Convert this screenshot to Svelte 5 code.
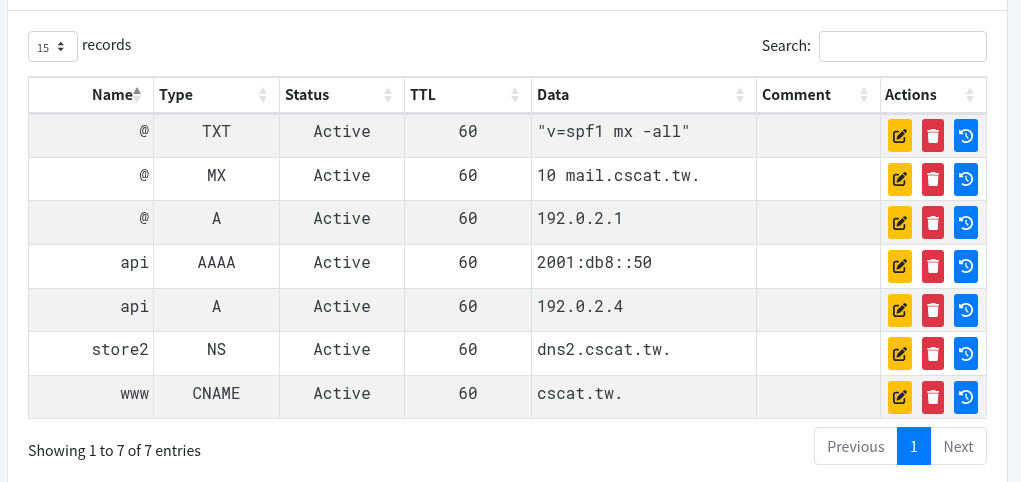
<script>
	const columns = [
		{ label: "Name", width: 125, cls: "right", sorted: true },
		{ label: "Type", width: 126 },
		{ label: "Status", width: 125 },
		{ label: "TTL", width: 127 },
		{ label: "Data", width: 225 },
		{ label: "Comment", width: 124 },
		{ label: "Actions", width: 106, cls: "actions-head" },
	];

	const records = [
		["@", "TXT", "Active", "60", '"v=spf1 mx -all"'],
		["@", "MX", "Active", "60", "10 mail.cscat.tw."],
		["@", "A", "Active", "60", "192.0.2.1"],
		["api", "AAAA", "Active", "60", "2001:db8::50"],
		["api", "A", "Active", "60", "192.0.2.4"],
		["store2", "NS", "Active", "60", "dns2.cscat.tw."],
		["www", "CNAME", "Active", "60", "cscat.tw."],
	];
</script>

<div class="page">
	<div class="card">
		<div class="card-top"></div>
		<div class="card-body">
			<div class="toolbar">
				<div class="length">
					<div class="select">
						<span>15</span>
						<svg viewBox="0 0 8 14" width="7.5" height="11"><path d="M4 1 8 5.5H0zM4 13 0 8.5h8z" fill="#343a40" /></svg>
					</div>
					<span class="length-label">records</span>
				</div>
				<div class="search">
					<span>Search:</span>
					<div class="search-input"></div>
				</div>
			</div>

			<table>
				<colgroup>
					{#each columns as c}
						<col style="width: {c.width}px" />
					{/each}
				</colgroup>
				<thead>
					<tr>
						{#each columns as c}
							<th class={c.cls}>
								{c.label}
								<span class="sort">
									<i class="up" class:on={c.sorted}></i>
									<i class="down"></i>
								</span>
							</th>
						{/each}
					</tr>
				</thead>
				<tbody>
					{#each records as r}
						<tr>
							<td class="name">{r[0]}</td>
							<td class="mid">{r[1]}</td>
							<td class="mid">{r[2]}</td>
							<td class="mid">{r[3]}</td>
							<td>{r[4]}</td>
							<td></td>
							<td class="actions">
								<div class="btns">
									<span class="btn yellow">
										<svg viewBox="0 0 512 512" width="14" height="14"><path fill="currentColor" d="M471.6 21.7c-21.9-21.9-57.3-21.9-79.2 0L362.3 51.7l97.9 97.9 30.1-30.1c21.9-21.9 21.9-57.3 0-79.2L471.6 21.7zm-299.2 220c-6.1 6.1-10.8 13.6-13.5 21.9l-29.6 88.8c-2.9 8.6-.6 18.1 5.8 24.6s15.9 8.7 24.6 5.8l88.8-29.6c8.2-2.7 15.7-7.4 21.9-13.5L437.7 172.3 339.7 74.3 172.4 241.7zM96 64C43 64 0 107 0 160V416c0 53 43 96 96 96H352c53 0 96-43 96-96V320c0-17.7-14.3-32-32-32s-32 14.3-32 32v96c0 17.7-14.3 32-32 32H96c-17.7 0-32-14.3-32-32V160c0-17.7 14.3-32 32-32h96c17.7 0 32-14.3 32-32s-14.3-32-32-32H96z" /></svg>
									</span>
									<span class="btn red">
										<svg viewBox="0 0 448 512" width="12.25" height="14"><path fill="currentColor" d="M135.2 17.7L128 32H32C14.3 32 0 46.3 0 64S14.3 96 32 96H416c17.7 0 32-14.3 32-32s-14.3-32-32-32H320l-7.2-14.3C307.4 6.8 296.3 0 284.2 0H163.8c-12.1 0-23.2 6.8-28.6 17.7zM416 128H32L53.2 467c1.6 25.3 22.6 45 47.9 45H346.9c25.3 0 46.3-19.7 47.9-45L416 128z" /></svg>
									</span>
									<span class="btn blue">
										<svg viewBox="0 0 512 512" width="14" height="14"><path fill="currentColor" d="M75 75L41 41C25.9 25.9 0 36.6 0 57.9V168c0 13.3 10.7 24 24 24H134.1c21.4 0 32.1-25.9 17-41l-30.8-30.8C155 85.5 203 64 256 64c106 0 192 86 192 192s-86 192-192 192c-40.8 0-78.6-12.7-109.7-34.4c-14.5-10.1-34.4-6.6-44.6 7.9s-6.6 34.4 7.9 44.6C151.2 495 201.7 512 256 512c141.4 0 256-114.6 256-256S397.4 0 256 0C185.3 0 121.3 28.7 75 75zm181 53c-13.3 0-24 10.7-24 24V256c0 6.4 2.5 12.5 7 17l72 72c9.4 9.4 24.6 9.4 33.9 0s9.4-24.6 0-33.9l-65-65V152c0-13.3-10.7-24-24-24z" /></svg>
									</span>
								</div>
							</td>
						</tr>
					{/each}
				</tbody>
			</table>

			<div class="footer">
				<div class="info">Showing 1 to 7 of 7 entries</div>
				<div class="pager">
					<span class="page-link">Previous</span>
					<span class="page-link current">1</span>
					<span class="page-link">Next</span>
				</div>
			</div>
		</div>
	</div>
</div>

<style>
	:global(body) {
		margin: 0;
		background: #f4f6f9;
	}
	.page {
		height: 482px;
		overflow: hidden;
		padding: 0 14px 0 8px;
		box-sizing: border-box;
		font-family: "Noto Sans CJK TC", "Noto Sans", sans-serif;
		font-size: 14.2px;
		color: #212529;
		will-change: opacity;
	}
	.card {
		width: 999px;
		height: 482px;
		background: #fff;
		border-right: 1px solid #dee2e6;
		box-shadow: -1px 0 0 #e6e8ee;
	}
	.card-top {
		height: 10px;
		border-bottom: 1px solid #dee2e6;
	}
	.card-body {
		padding: 20px 20px 0;
	}
	.toolbar {
		display: flex;
		justify-content: space-between;
		height: 45px;
	}
	.length {
		display: flex;
		align-items: flex-start;
	}
	.select {
		width: 50px;
		height: 31px;
		box-sizing: border-box;
		border: 1px solid #ced4da;
		border-radius: 4px;
		display: flex;
		align-items: center;
		padding-left: 8px;
		gap: 8px;
		font-size: 11px;
		color: #495057;
	}
	.length-label {
		margin-left: 4px;
		line-height: 27px;
	}
	.search {
		display: flex;
		align-items: flex-start;
		line-height: 29px;
	}
	.search-input {
		width: 168px;
		height: 31px;
		box-sizing: border-box;
		margin-left: 8px;
		border: 1px solid #ced4da;
		border-radius: 4px;
	}
	table {
		width: 958px;
		table-layout: fixed;
		border-collapse: collapse;
		border: 1px solid #dee2e6;
		border-top-width: 2px;
	}
	th {
		position: relative;
		height: 36.7px;
		padding: 0 20px 2px 5px;
		box-sizing: border-box;
		text-align: left;
		font-weight: 700;
		border: 1px solid #dee2e6;
		border-bottom-width: 3px;
		line-height: 1;
	}
	th.right {
		text-align: right;
	}
	th.actions-head {
		padding-left: 4px;
	}
	.sort {
		position: absolute;
		right: 12px;
		top: 9px;
		display: flex;
		flex-direction: column;
		gap: 2px;
	}
	.sort i {
		display: block;
		width: 0;
		height: 0;
		border-left: 4px solid transparent;
		border-right: 4px solid transparent;
	}
	.up {
		border-bottom: 7px solid #e1e3e5;
	}
	.up.on {
		border-bottom-color: #8a8d90;
	}
	.down {
		border-top: 7px solid #e1e3e5;
	}
	td {
		height: 43.6px;
		padding: 4px 5px 0;
		box-sizing: border-box;
		vertical-align: top;
		font-family: "Roboto Mono", "Liberation Mono", monospace;
		font-size: 16px;
		line-height: 26px;
		color: #343a40;
		border: 1px solid #dee2e6;
	}
	tbody tr:first-child td {
		padding-top: 3px;
	}
	tbody tr:nth-child(odd) {
		background: #f2f2f2;
	}
	.name {
		text-align: right;
		padding-right: 4px;
	}
	.mid {
		text-align: center;
	}
	td.actions,
	tbody tr:first-child td.actions {
		padding: 5px 0 0 7px;
	}
	tbody tr:first-child td.actions {
		padding-top: 4px;
	}
	.btns {
		display: flex;
		gap: 10px;
	}
	.btn {
		height: 33px;
		width: 24px;
		border-radius: 3px;
		display: flex;
		align-items: center;
		justify-content: center;
		color: #fff;
	}
	.yellow {
		background: #ffc107;
		color: #212529;
	}
	.red {
		background: #dc3545;
		width: 22px;
	}
	.blue {
		background: #007bff;
	}
	.footer {
		display: flex;
		justify-content: space-between;
		margin-top: 7.7px;
	}
	.info {
		padding-top: 11px;
		line-height: 24px;
	}
	.pager {
		display: flex;
		height: 38px;
		box-sizing: border-box;
		border: 1px solid #dee2e6;
		border-radius: 4px;
		color: #6c757d;
	}
	.page-link {
		display: flex;
		align-items: center;
		padding: 0 12.5px;
	}
	.current {
		margin: -1px 0;
		padding: 0 13px;
		background: #007bff;
		color: #fff;
	}
</style>
